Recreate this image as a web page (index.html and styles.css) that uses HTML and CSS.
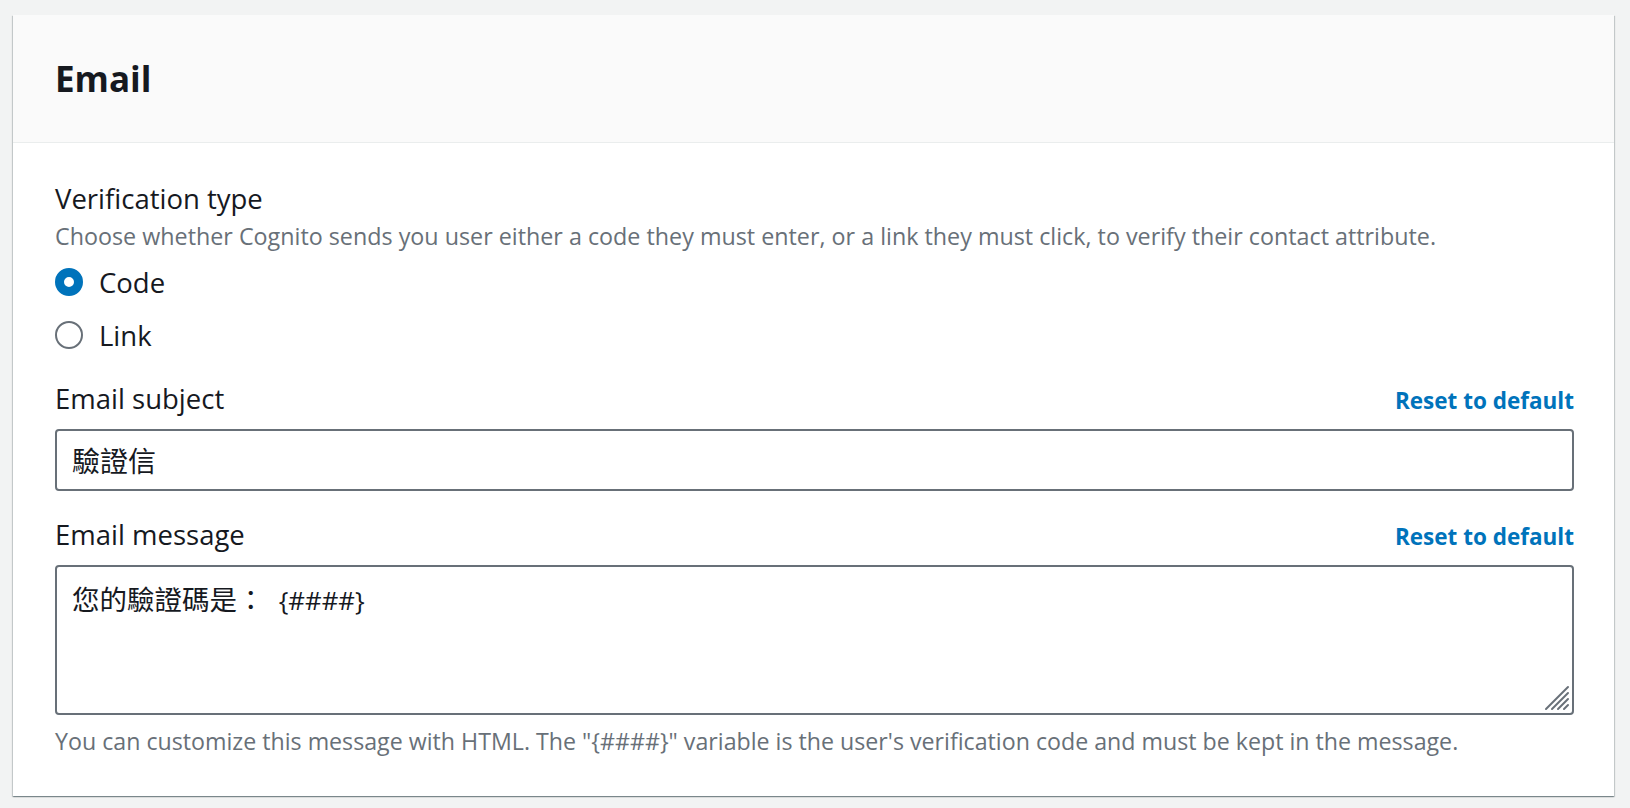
FILE: index.html
```html
<!DOCTYPE html>
<html lang="en">
<head>
<meta charset="utf-8">
<title>Email</title>
<link rel="stylesheet" href="styles.css">
</head>
<body>
<div class="card">
  <div class="card-header">
    <h2 class="card-title">Email</h2>
  </div>
  <div class="card-body">
    <div class="field">
      <div class="label">Verification type</div>
      <div class="desc">Choose whether Cognito sends you user either a code they must enter, or a link they must click, to verify their contact attribute.</div>
      <div class="radios">
        <label class="radio"><span class="dot checked"></span><span class="radio-text">Code</span></label>
        <label class="radio"><span class="dot"></span><span class="radio-text">Link</span></label>
      </div>
    </div>
    <div class="field">
      <div class="label-row">
        <span class="label">Email subject</span>
        <a class="reset" href="#">Reset to default</a>
      </div>
      <div class="input" lang="zh-TW">驗證信</div>
    </div>
    <div class="field">
      <div class="label-row">
        <span class="label">Email message</span>
        <a class="reset" href="#">Reset to default</a>
      </div>
      <div class="textarea" lang="zh-TW">您的驗證碼是： <span class="var">{####}</span>
        <svg class="grip" width="26" height="26" viewBox="0 0 26 26">
          <g stroke="#687078" stroke-width="2" stroke-linecap="round">
            <line x1="2" y1="24" x2="24" y2="2"/>
            <line x1="8" y1="24" x2="24" y2="8"/>
            <line x1="14" y1="24" x2="24" y2="14"/>
            <line x1="20" y1="24" x2="24" y2="20"/>
          </g>
        </svg>
      </div>
      <div class="help">You can customize this message with HTML. The "{####}" variable is the user's verification code and must be kept in the message.</div>
    </div>
  </div>
</div>
</body>
</html>
```
FILE: styles.css
```css
html, body {
  margin: 0;
  padding: 0;
  background: #f2f3f3;
}
body {
  padding: 15px 16px 12px 13px;
  font-family: "Open Sans", "Noto Sans CJK TC", sans-serif;
  color: #16191f;
}
.card {
  background: #ffffff;
  box-shadow: 0 1px 1px 0 rgba(0, 28, 36, 0.3), 1px 1px 1px 0 rgba(0, 28, 36, 0.15), -1px 1px 1px 0 rgba(0, 28, 36, 0.15);
}
.card-header {
  background: #fafafa;
  border-bottom: 1px solid #eaeded;
  height: 127px;
  display: flex;
  align-items: center;
  padding: 0 42px;
}
.card-title {
  margin: 0;
  font-size: 35px;
  font-weight: 700;
  line-height: 40px;
}
.card-body {
  padding: 38px 40px 39px 42px;
}
.field + .field {
  margin-top: 26px;
}
.label {
  font-size: 27.5px;
  line-height: 36px;
  color: #16191f;
}
.desc {
  margin-top: 3px;
  font-size: 23.3px;
  line-height: 32px;
  color: #687078;
}
.radios {
  display: flex;
  flex-direction: column;
  gap: 13px;
  margin-top: 10px;
}
.radio {
  display: flex;
  align-items: center;
  gap: 16px;
  height: 40px;
}
.dot {
  box-sizing: border-box;
  width: 28px;
  height: 28px;
  border-radius: 50%;
  border: 2px solid #687078;
  background: #fff;
}
.dot.checked {
  border: 9px solid #0073bb;
  background: #fff;
}
.radio-text {
  font-size: 27.5px;
  color: #16191f;
}
.label-row {
  display: flex;
  justify-content: space-between;
  align-items: baseline;
}
.reset {
  font-size: 22.5px;
  font-weight: 700;
  color: #0073bb;
  text-decoration: none;
}
.input {
  box-sizing: border-box;
  margin-top: 12px;
  height: 62px;
  border: 2px solid #687078;
  border-radius: 4px;
  padding: 0 15px;
  display: flex;
  align-items: center;
  font-size: 28px;
}
.textarea {
  position: relative;
  box-sizing: border-box;
  margin-top: 12px;
  height: 150px;
  border: 2px solid #687078;
  border-radius: 4px;
  padding: 16px 15px;
  font-size: 27.5px;
  line-height: 34px;
}
.var {
  margin-left: 7px;
  font-size: 25.8px;
}
.grip {
  position: absolute;
  right: 2px;
  bottom: 2px;
}
.help {
  margin-top: 10px;
  font-size: 23.2px;
  line-height: 32px;
  color: #687078;
}
```
